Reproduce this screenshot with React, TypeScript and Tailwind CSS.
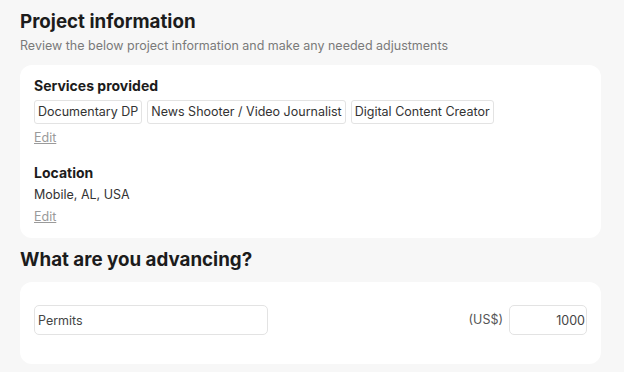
import React from "react";

export default function App() {
  const tags = ["Documentary DP", "News Shooter / Video Journalist", "Digital Content Creator"];
  return (
    <div className="min-h-[372px] w-[624px] bg-[#f7f7f7] pl-5 pr-[23px] pt-[9px] text-[#1f1f1f]" style={{ fontFamily: "Inter, 'Noto Sans', sans-serif" }}>
      <h1 className="text-[18.75px] font-bold leading-[26px] text-[#1c1c1c]">Project information</h1>
      <p className="mt-[2px] text-[12.5px] leading-[18px] text-[#7a7a7a]">Review the below project information and make any needed adjustments</p>
      <div className="mt-[10px] rounded-[12px] bg-white px-[14px] pt-[11px] pb-[11px]">
        <div className="text-[14px] font-bold leading-[20px] text-[#1c1c1c]">Services provided</div>
        <div className="mt-[4px] flex gap-[5px]">
          {tags.map((t) => (
            <span key={t} className="rounded-[3px] border border-[#e3e3e3] px-[3px] text-[12.5px] leading-[22px] text-[#333]">{t}</span>
          ))}
        </div>
        <div className="mt-[4px] text-[12.5px] leading-[20px] text-[#9a9a9a] underline">Edit</div>
        <div className="mt-[15px] text-[14px] font-bold leading-[20px] text-[#1c1c1c]">Location</div>
        <div className="mt-[2px] text-[12.5px] leading-[20px] text-[#333]">Mobile, AL, USA</div>
        <div className="mt-[2px] text-[12.5px] leading-[20px] text-[#9a9a9a] underline">Edit</div>
      </div>
      <h2 className="mt-[9px] text-[18.75px] font-bold leading-[26px] text-[#1c1c1c]">What are you advancing?</h2>
      <div className="mt-[9px] flex items-start rounded-[12px] bg-white px-[14px] pt-[23px] pb-[29px]">
        <input readOnly value="Permits" className="h-[30px] w-[234px] rounded-[5px] border border-[#e3e3e3] px-[3px] text-[12.5px] text-[#444] outline-none" />
        <div className="flex-1" />
        <span className="mr-[6px] self-center text-[12.5px] text-[#555]">(US$)</span>
        <input readOnly value="1000" className="h-[30px] w-[78px] rounded-[5px] border border-[#e3e3e3] px-[1px] text-right text-[12.5px] text-[#444] outline-none" />
      </div>
    </div>
  );
}
